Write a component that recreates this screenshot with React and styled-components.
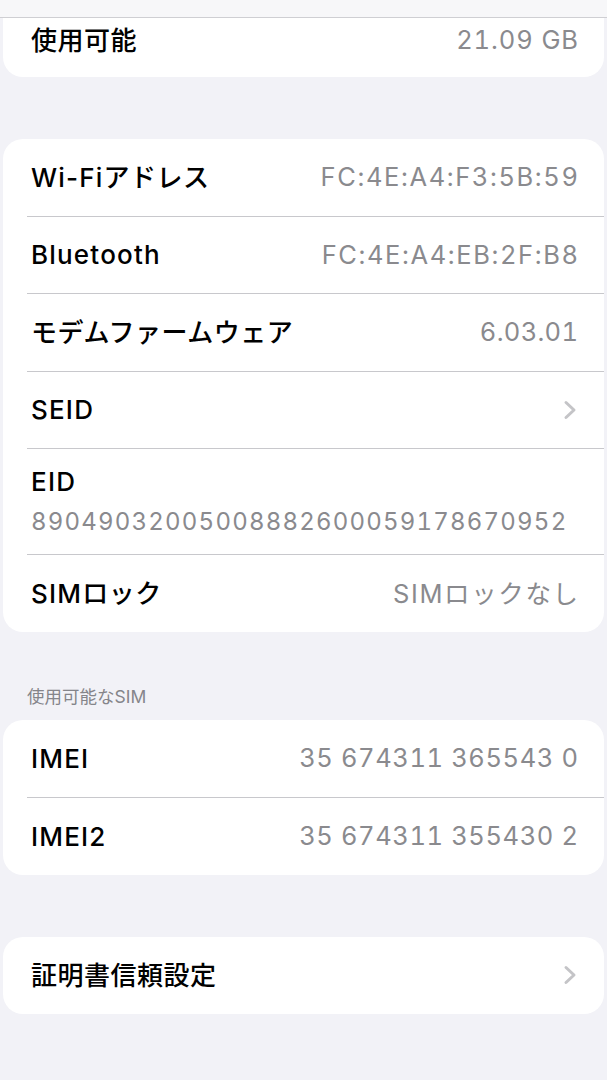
import React from "react";
import styled, { createGlobalStyle } from "styled-components";

const Global = createGlobalStyle`
  html, body { margin: 0; padding: 0; background: #f2f2f7; }
  body {
    font-family: Inter, "Noto Sans CJK JP", sans-serif;
    -webkit-font-smoothing: antialiased;
  }
`;

const Screen = styled.div`
  width: 607px;
  min-height: 1080px;
  background: #f2f2f7;
  display: flex;
  flex-direction: column;
`;

const TopBar = styled.div`
  height: 17px;
  background: #f7f7f9;
  border-bottom: 1px solid #cfcfd3;
`;

const Content = styled.div`
  padding: 0 3px;
  display: flex;
  flex-direction: column;
`;

const Card = styled.div`
  background: #ffffff;
  border-radius: ${(p) => (p.$cutTop ? "0 0 20px 20px" : "20px")};
  margin-top: ${(p) => p.$gap || 0}px;
  overflow: hidden;
`;

const Row = styled.div`
  padding-left: 24px;
`;

const rowHeight = (p) => {
  if (p.$stacked) return 106;
  if (p.$cut) return 59;
  return p.$last ? 77 : 77.5;
};

const RowInner = styled.div`
  display: flex;
  flex-direction: ${(p) => (p.$stacked ? "column" : "row")};
  align-items: ${(p) => (p.$stacked || p.$cut ? "flex-start" : "center")};
  justify-content: ${(p) => (p.$stacked ? "center" : "space-between")};
  height: ${rowHeight}px;
  padding: ${(p) => (p.$cut ? "6px 26px 0 4px" : "0 26px 0 4px")};
  box-sizing: border-box;
  border-bottom: ${(p) => (p.$last ? "none" : "1px solid #c8c8cc")};
`;

const LabelText = styled.span`
  font-size: 26px;
  line-height: 32px;
  font-weight: 500;
  color: #000000;
  letter-spacing: 0.5px;
  padding-top: 1px;
`;

const Latin = styled.span`
  letter-spacing: 1.2px;
`;

const Value = styled.span`
  font-size: 25.5px;
  line-height: 32px;
  font-weight: 400;
  color: #8a8a8e;
  font-feature-settings: "tnum";
  letter-spacing: ${(p) => p.$spacing ?? 0.5}px;
  margin-right: ${(p) => -(p.$spacing ?? 0.5)}px;
`;

const SubValue = styled.span`
  font-size: 24px;
  line-height: 32px;
  font-weight: 400;
  color: #8a8a8e;
  font-feature-settings: "tnum";
  letter-spacing: 1.2px;
  margin-top: 8px;
`;

const SectionHeader = styled.div`
  margin: 54px 0 12px;
  padding-left: 24px;
  font-size: 17.5px;
  line-height: 22px;
  color: #85858a;
  font-weight: 400;
`;

const Label = ({ children }) => {
  const parts = children.split(/([A-Za-z0-9-]+)/).filter(Boolean);
  return (
    <LabelText>
      {parts.map((part, i) =>
        /^[A-Za-z0-9-]+$/.test(part) ? <Latin key={i}>{part}</Latin> : <span key={i}>{part}</span>
      )}
    </LabelText>
  );
};

const Chevron = () => (
  <svg width="16" height="20" viewBox="0 0 16 20" aria-hidden="true">
    <path
      d="M4 2.5 L12 10 L4 17.5"
      fill="none"
      stroke="#c4c4c7"
      strokeWidth="3"
      strokeLinecap="round"
      strokeLinejoin="round"
    />
  </svg>
);

const InfoRow = ({ label, value, chevron, last, cut, spacing }) => (
  <Row>
    <RowInner $last={last} $cut={cut}>
      <Label>{label}</Label>
      {chevron ? <Chevron /> : <Value $spacing={spacing}>{value}</Value>}
    </RowInner>
  </Row>
);

const StackedRow = ({ label, value }) => (
  <Row>
    <RowInner $stacked>
      <Label>{label}</Label>
      <SubValue>{value}</SubValue>
    </RowInner>
  </Row>
);

export default function App() {
  return (
    <>
      <Global />
      <Screen>
        <TopBar />
        <Content>
          <Card $cutTop>
            <InfoRow label="使用可能" value="21.09 GB" cut last spacing={0.9} />
          </Card>

          <Card $gap={62}>
            <InfoRow label="Wi-Fiアドレス" value="FC:4E:A4:F3:5B:59" spacing={1.6} />
            <InfoRow label="Bluetooth" value="FC:4E:A4:EB:2F:B8" spacing={1.6} />
            <InfoRow label="モデムファームウェア" value="6.03.01" spacing={0.3} />
            <InfoRow label="SEID" chevron />
            <StackedRow label="EID" value="89049032005008882600059178670952" />
            <InfoRow label="SIMロック" value="SIMロックなし" last spacing={1.6} />
          </Card>

          <SectionHeader>使用可能なSIM</SectionHeader>

          <Card>
            <InfoRow label="IMEI" value="35 674311 365543 0" spacing={0.6} />
            <InfoRow label="IMEI2" value="35 674311 355430 2" last spacing={0.6} />
          </Card>

          <Card $gap={62}>
            <InfoRow label="証明書信頼設定" chevron last />
          </Card>
        </Content>
      </Screen>
    </>
  );
}
